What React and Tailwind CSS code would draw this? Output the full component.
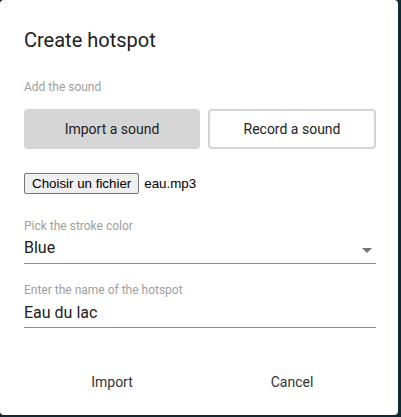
export default function App() {
  const roboto = { fontFamily: "Roboto, 'Noto Sans', sans-serif" };
  return (
    <div className="w-[401px] h-[417px] bg-[#0f2a33] overflow-hidden" style={roboto}>
      <div className="w-[398px] h-[415px] bg-white rounded-[4px] pl-6 pr-[22px] flex flex-col">
        <div className="mt-6 h-8 leading-8 text-[20px] text-[#212121]">Create hotspot</div>
        <div className="mt-[23px] h-4 leading-4 text-[12px] text-[#9e9e9e]">Add the sound</div>
        <div className="mt-[14px] flex gap-2 h-10">
          <button className="w-[176px] h-10 rounded-[4px] bg-[#d5d5d5] text-[14px] text-[#222]">Import a sound</button>
          <button className="w-[168px] h-10 rounded-[4px] bg-white border-2 border-[#d3d3d3] text-[14px] text-[#222]">Record a sound</button>
        </div>
        <div className="mt-6 flex items-center h-[21px]" style={{ fontFamily: "'Liberation Sans', Arial, sans-serif" }}>
          <span className="h-[21px] px-[7px] flex items-center border border-[#767676] rounded-[2px] bg-[#efefef] text-[13.33px] text-black">Choisir un fichier</span>
          <span className="ml-[5px] text-[13.33px] text-black">eau.mp3</span>
        </div>
        <div className="mt-6 h-4 leading-4 text-[12px] text-[#9e9e9e]">Pick the stroke color</div>
        <div className="pt-[2px] flex items-start justify-between pb-[3px] border-b border-[#8f8f8f]">
          <span className="h-6 leading-6 text-[16px] text-[#212121]">Blue</span>
          <svg width="10" height="5" viewBox="0 0 10 5" className="mt-[12px] mr-[4px]">
            <path d="M0 0 L10 0 L5 5 Z" fill="#757575" />
          </svg>
        </div>
        <div className="mt-[18px] h-4 leading-4 text-[12px] text-[#9e9e9e]">Enter the name of the hotspot</div>
        <div className="pt-[3px] pb-[2px] border-b border-[#8f8f8f]">
          <span className="block h-6 leading-6 text-[16px] text-[#212121]">Eau du lac</span>
        </div>
        <div className="mt-9 flex gap-2 h-9">
          <button className="w-[176px] h-9 text-[14px] text-[#333]">Import</button>
          <button className="w-[168px] h-9 text-[14px] text-[#333]">Cancel</button>
        </div>
      </div>
    </div>
  );
}
